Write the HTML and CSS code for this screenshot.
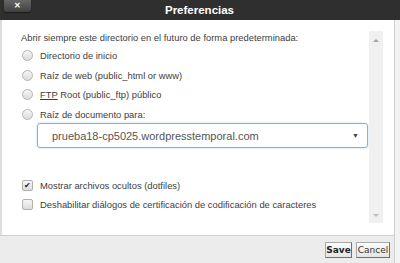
FILE: index.html
```html
<!DOCTYPE html>
<html>

<head>
    <meta charset="utf-8">
    <title>Preferencias</title>
    <link rel="stylesheet" href="styles.css">
</head>

<body>
    <div id="dialog">
        <div class="titlebar">
            <span class="close">&#x2715;</span>
            <h1 class="title">Preferencias</h1>
        </div>

        <div class="main">
            <div class="content">
                <p class="intro">Abrir siempre este directorio en el futuro de forma predeterminada:</p>

                <label class="option"><span class="radio"></span>Directorio de inicio</label>
                <label class="option"><span class="radio"></span>Raíz de web (public_html or www)</label>
                <label class="option"><span class="radio"></span><u>FTP</u>&nbsp;Root (public_ftp) público</label>
                <label class="option"><span class="radio"></span>Raíz de documento para:</label>

                <div class="select">
                    <span>prueba18-cp5025.wordpresstemporal.com</span>
                    <span class="caret">&#9660;</span>
                </div>

                <label class="option checked-row"><span class="check on">&#10004;</span>Mostrar archivos ocultos (dotfiles)</label>
                <label class="option"><span class="check"></span>Deshabilitar diálogos de certificación de codificación de caracteres</label>
            </div>

            <div class="scrollbar">
                <span class="arrow up"></span>
                <span class="arrow down"></span>
            </div>
        </div>

        <div class="footer">
            <button class="btn save">Save</button>
            <button class="btn cancel">Cancel</button>
        </div>
    </div>
</body>

</html>
```

FILE: styles.css
```css
:root {
    --bar: #2f2f2f;
    --text: #3e3e3e;
    --line: #cfcfcf;
    --panel: #ffffff;
    --foot: #ececec;
}

body {
    margin: 0;
    width: 400px;
    height: 263px;
    overflow: hidden;
    background-color: #f3f3f3;
    font-family: 'Liberation Sans', Arial, sans-serif;
    color: var(--text);
}

#dialog {
    display: flex;
    flex-direction: column;
    height: 263px;
}

.titlebar {
    position: relative;
    height: 20px;
    background-color: var(--bar);
    display: flex;
    align-items: center;
    justify-content: center;
}

.title {
    margin: 0 0 0 -1px;
    font-family: 'Liberation Sans', Arial, sans-serif;
    font-size: 11.5px;
    font-weight: bold;
    color: #fff;
}

.close {
    position: absolute;
    top: 0;
    left: 4px;
    width: 27px;
    height: 12px;
    border-radius: 0 0 3px 3px;
    background: linear-gradient(#666, #404040);
    box-shadow: 0 1px 1px #1a1a1a;
    color: #fff;
    font-size: 8px;
    font-weight: bold;
    line-height: 12px;
    text-align: center;
}

.main {
    flex: 1;
    display: flex;
    background-color: var(--panel);
    border-left: 2px solid #dedede;
    border-right: 1px solid var(--line);
    margin-right: 5px;
}

.content {
    flex: 1;
    padding: 11px 0 0 19px;
    font-size: 9.4px;
}

.intro {
    margin: 0 0 2px 0;
    line-height: 13px;
}

.option {
    display: flex;
    align-items: center;
    height: 19.5px;
}

.radio {
    width: 9px;
    height: 9px;
    border: 1px solid #b4b4b4;
    border-radius: 50%;
    background: linear-gradient(#f6f6f6, #dcdcdc);
    margin: 0 7px 0 1px;
}

.check {
    width: 9px;
    height: 9px;
    border: 1px solid #b0b0b0;
    border-radius: 2px;
    background: linear-gradient(#f6f6f6, #dcdcdc);
    margin: 0 7px 0 1px;
    font-size: 8px;
    line-height: 9px;
    text-align: center;
    color: #222;
}

.select {
    display: flex;
    justify-content: space-between;
    align-items: center;
    height: 23px;
    margin: -1px 0 0 16px;
    padding: 0 8px 0 14px;
    border: 1px solid #7cb3e6;
    border-radius: 3px;
    box-shadow: 0 0 2px #a8cdf0;
    font-size: 11px;
    color: #555;
}

.caret {
    font-size: 7px;
    color: #444;
}

.checked-row {
    margin-top: 27px;
    height: 20px;
}

.scrollbar {
    width: 14px;
    margin: 11px 11px 12px 1px;
    background-color: #f0f0f0;
    display: flex;
    flex-direction: column;
    justify-content: space-between;
    align-items: center;
    padding: 8px 0 6px;
}

.arrow {
    width: 0;
    height: 0;
    border-left: 3px solid transparent;
    border-right: 3px solid transparent;
}

.arrow.up {
    border-bottom: 3px solid #a3a3a3;
}

.arrow.down {
    border-top: 3px solid #bcbcbc;
}

.footer {
    height: 28px;
    background-color: var(--foot);
    border-top: 1px solid var(--line);
    border-right: 1px solid var(--line);
    margin-right: 5px;
    display: flex;
    justify-content: flex-end;
    align-items: flex-start;
    gap: 4px;
    padding: 6px 4px 0 0;
    box-sizing: border-box;
}

.btn {
    height: 16px;
    padding: 0;
    border: 1px solid #a9a9a9;
    border-right-color: #6f6f6f;
    border-bottom-color: #6f6f6f;
    background: linear-gradient(#fdfdfd, #e4e4e4);
    font-family: 'DejaVu Sans', Verdana, sans-serif;
    font-size: 9px;
    color: #333;
    line-height: 12px;
}

.save {
    width: 27px;
    font-weight: bold;
    color: #222;
}

.cancel {
    width: 34px;
}
```
